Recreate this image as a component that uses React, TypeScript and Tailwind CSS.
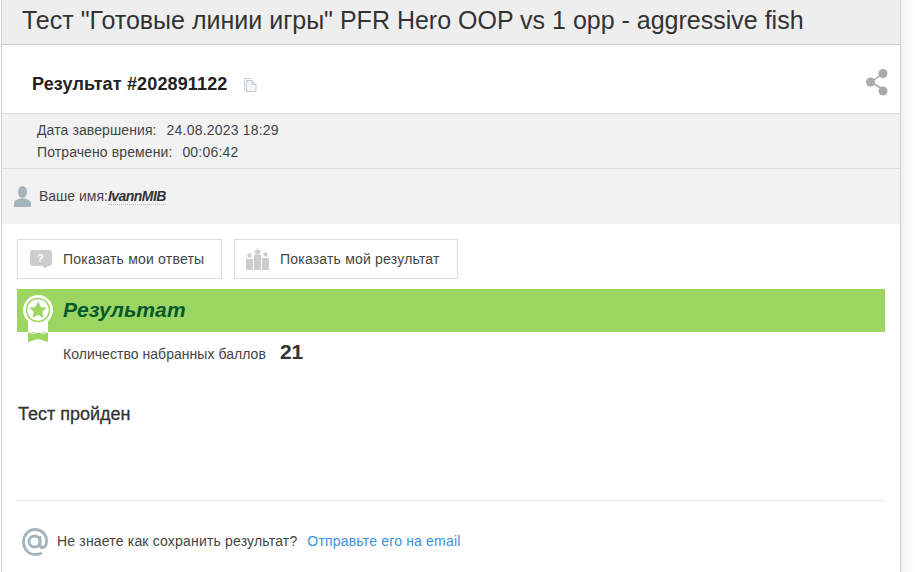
export default function App() {
  return (
    <div className="flex h-[572px] w-[915px] overflow-hidden bg-white pl-px font-['Liberation_Sans',sans-serif] text-[#333]">
      <div className="h-[572px] w-[900px] border-x border-[#cfcfcf] bg-white">
        <div className="flex h-[45px] items-center border-b border-[#cfcfcf] bg-[#eeeeee] pb-[5px] pl-[20px] text-[25px] leading-[30px] whitespace-nowrap">
          Тест "Готовые линии игры" PFR Hero OOP vs 1 opp - aggressive fish
        </div>
        <div className="flex h-[69px] items-center justify-between border-b border-[#dddddd] pl-[30px] pr-[11px] pt-[10px]">
          <div className="flex items-center">
            <span className="text-[18px] leading-[20px] font-bold tracking-[0.15px] text-[#222]">Результат #202891122</span>
            <svg className="ml-[16px] mt-[1px]" width="13" height="14" viewBox="0 0 13 14" fill="none">
              <path d="M.5 11.500v-11h6l1 1" stroke="#c8ced2" strokeWidth="1" />
              <path d="M2.500 13.500v-11h5.500l4 4v7z" fill="#f5f6f7" stroke="#c2c9ce" strokeWidth="1" />
              <path d="M8 2.500v4h4" stroke="#c2c9ce" strokeWidth="1" />
            </svg>
          </div>
          <svg className="-mt-[4px]" width="24" height="28" viewBox="0 0 24 28">
            <path d="M6 14 L19 5 M6 14 L19 22" stroke="#aaaaaa" strokeWidth="1.500" />
            <circle cx="18" cy="5.500" r="4.500" fill="#aaaaaa" />
            <circle cx="5.500" cy="14" r="4.500" fill="#aaaaaa" />
            <circle cx="18" cy="23" r="4.500" fill="#aaaaaa" />
          </svg>
        </div>
        <div className="flex h-[55px] flex-col gap-[6px] border-b border-[#dddddd] bg-[#f2f2f2] pl-[35px] pt-[8px] text-[14px] leading-[16px] tracking-[0.1px] text-[#444]">
          <div className="flex gap-[10px]"><span>Дата завершения:</span><span className="tracking-[0.2px]">24.08.2023 18:29</span></div>
          <div className="flex gap-[10px]"><span>Потрачено времени:</span><span className="tracking-[0.2px]">00:06:42</span></div>
        </div>
        <div className="flex h-[55px] items-center bg-[#f2f2f2] pl-[12px] text-[14px] text-[#444]">
          <svg width="17" height="21" viewBox="0 0 17 21" className="mr-[8px]">
            <ellipse cx="8.500" cy="6" rx="4.500" ry="6" fill="#a5b3bd" />
            <path d="M0 21v-4c0-2.500 3.500-3.500 5.500-4.500h6c2 1 5.500 2 5.500 4.500v4z" fill="#a5b3bd" />
          </svg>
          <span>Ваше имя:</span>
          <span className="border-b border-dotted border-[#bbbbbb] leading-[16px] font-bold tracking-[-0.55px] text-[#333] italic">IvannMIB</span>
        </div>
        <div className="px-[15px] pt-[15px]">
          <div className="flex gap-[12px]">
            <div className="flex h-[40px] w-[205px] items-center border border-[#dddddd] pl-[11px] text-[14px] tracking-[0.2px] text-[#444]">
              <svg width="24" height="20" viewBox="0 0 24 20" className="mr-[10px]">
                <path d="M3 1h17q3 0 3 3v10q0 3-3 3h-1l-3 2.500-2-2.500H4q-3 0-3-3V4q0-3 2-3z" fill="#cccccc" />
                <text x="11.500" y="13" fontSize="11" fontWeight="bold" fill="#ffffff" textAnchor="middle" fontFamily="Liberation Sans">?</text>
              </svg>
              Показать мои ответы
            </div>
            <div className="flex h-[40px] w-[224px] items-center border border-[#dddddd] pl-[11px] text-[14px] tracking-[0.2px] text-[#444]">
              <svg width="24" height="22" viewBox="0 0 24 22" className="mr-[10px]">
                <rect x="0" y="11" width="7" height="11" fill="#cccccc" />
                <rect x="8" y="7" width="7" height="15" fill="#cccccc" />
                <rect x="16" y="10" width="7" height="12" fill="#cccccc" />
                <path d="M11.500 0l1.200 2.500 2.800.3-2 1.900.5 2.800-2.500-1.300-2.500 1.300.5-2.800-2-1.900 2.800-.3z" fill="#cccccc" />
                <path d="M3.500 4l1 2 2.100.3-1.500 1.500.4 2.100-2-1-2 1 .4-2.100-1.500-1.500 2.100-.3z" fill="#cccccc" />
                <path d="M19.500 3l1 2 2.100.3-1.500 1.500.4 2.100-2-1-2 1 .4-2.100-1.500-1.500 2.100-.3z" fill="#cccccc" />
              </svg>
              Показать мой результат
            </div>
          </div>
          <div className="relative mt-[10px]">
            <div className="h-[43px] bg-[#9dd563] pl-[46px] text-[21px] leading-[42px] font-bold tracking-[0.2px] text-[#03592c] italic">Результат</div>
            <svg className="absolute left-[5px] top-[6px]" width="32" height="48" viewBox="0 0 32 48">
              <path d="M6 24h20v14H6z" fill="#ffffff" />
              <path d="M6 37h20v10l-10-3-10 3z" fill="#9dd563" />
              <path d="M6 37l5 1.500 5-1.500 5 1.500 5-1.500" stroke="#ffffff" strokeWidth="1" fill="none" />
              <circle cx="16" cy="15" r="15" fill="#ffffff" />
              <circle cx="16" cy="15" r="11.500" fill="none" stroke="#9dd563" strokeWidth="1.500" />
              <path d="M16 6.500l2.700 5.400 5.900.8-4.300 4.100 1.100 5.900-5.400-2.900-5.400 2.900 1.100-5.900-4.300-4.100 5.900-.8z" fill="#9dd563" />
            </svg>
            <div className="flex items-center pl-[46px] pt-[10px] text-[14px] leading-[24px] tracking-[0.04px] text-[#444]">
              <span>Количество набранных баллов</span>
              <span className="-mt-[4px] ml-[14px] text-[21px] font-bold text-[#333]">21</span>
            </div>
            <div className="mt-[38px] pl-[1px] text-[18px] leading-[20px] font-medium text-[#333] [-webkit-text-stroke:0.3px_#333]">Тест пройден</div>
          </div>
          <div className="mt-[76px] border-t border-[#e6e6e6]" />
          <div className="mt-[24px] flex items-center pl-[5px] text-[14px] leading-[32px] tracking-[0.18px] text-[#444]">
            <svg className="mr-[9px] mt-[1px]" width="26" height="28" viewBox="0 0 26 28" fill="none" stroke="#a5b3bd" strokeWidth="2.800">
              <path d="M20 25c-2 1-4 1.500-7 1.500C6.500 26.500 1.500 21 1.500 14S6.500 1.500 13 1.500 24.500 6 24.500 13c0 4-1.500 6.500-4 6.500-1.700 0-2.500-1-2.500-2.500V8" />
              <circle cx="12.500" cy="13.500" r="5.500" />
            </svg>
            <span>Не знаете как сохранить результат?</span>
            <span className="ml-[10px] text-[#3b90e0]">Отправьте его на email</span>
          </div>
        </div>
      </div>
      <div className="h-full w-[14px] bg-gradient-to-r from-[#f1f1f1] to-white" />
    </div>
  );
}
